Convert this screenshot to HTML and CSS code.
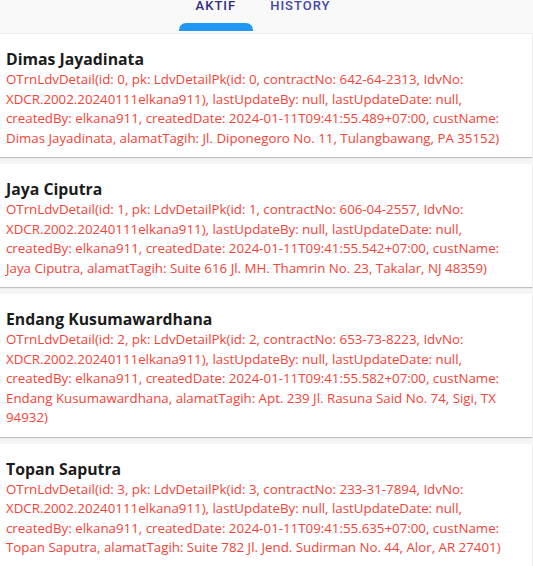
FILE: index.html
```html
<!DOCTYPE html>
<html>
<head>
<meta charset="utf-8">
<link rel="stylesheet" href="styles.css">
</head>
<body>
<div class="tabbar">
  <div class="tab active"><span class="label">AKTIF</span><span class="indicator"></span></div>
  <div class="tab"><span class="label">HISTORY</span></div>
</div>
<div class="list">
  <div class="card">
    <div class="name">Dimas Jayadinata</div>
    <div class="detail">OTrnLdvDetail(id: 0, pk: LdvDetailPk(id: 0, contractNo: 642-64-2313, IdvNo: XDCR.2002.20240111elkana911), lastUpdateBy: null, lastUpdateDate: null, createdBy: elkana911, createdDate: 2024-01-11T09:41:55.489+07:00, custName: Dimas Jayadinata, alamatTagih: Jl. Diponegoro No. 11, Tulangbawang, PA 35152)</div>
  </div>
  <div class="card">
    <div class="name">Jaya Ciputra</div>
    <div class="detail">OTrnLdvDetail(id: 1, pk: LdvDetailPk(id: 1, contractNo: 606-04-2557, IdvNo: XDCR.2002.20240111elkana911), lastUpdateBy: null, lastUpdateDate: null, createdBy: elkana911, createdDate: 2024-01-11T09:41:55.542+07:00, custName: Jaya Ciputra, alamatTagih: Suite 616 Jl. MH. Thamrin No. 23, Takalar, NJ 48359)</div>
  </div>
  <div class="card">
    <div class="name">Endang Kusumawardhana</div>
    <div class="detail">OTrnLdvDetail(id: 2, pk: LdvDetailPk(id: 2, contractNo: 653-73-8223, IdvNo: XDCR.2002.20240111elkana911), lastUpdateBy: null, lastUpdateDate: null, createdBy: elkana911, createdDate: 2024-01-11T09:41:55.582+07:00, custName: Endang Kusumawardhana, alamatTagih: Apt. 239 Jl. Rasuna Said No. 74, Sigi, TX 94932)</div>
  </div>
  <div class="card">
    <div class="name">Topan Saputra</div>
    <div class="detail">OTrnLdvDetail(id: 3, pk: LdvDetailPk(id: 3, contractNo: 233-31-7894, IdvNo: XDCR.2002.20240111elkana911), lastUpdateBy: null, lastUpdateDate: null, createdBy: elkana911, createdDate: 2024-01-11T09:41:55.635+07:00, custName: Topan Saputra, alamatTagih: Suite 782 Jl. Jend. Sudirman No. 44, Alor, AR 27401)</div>
  </div>
</div>
</body>
</html>
```
FILE: styles.css
```css
html, body {
  margin: 0;
  padding: 0;
  background: #f5f5f5;
  overflow: hidden;
}
body {
  width: 533px;
  height: 566px;
  font-family: "Open Sans", "Noto Sans", sans-serif;
}
.tabbar {
  display: flex;
  justify-content: center;
  height: 34px;
  background: #f9f9f9;
  border-bottom: 1px solid #ececec;
  box-sizing: border-box;
  padding-right: 7px;
}
.tab {
  display: flex;
  flex-direction: column;
  align-items: center;
  padding: 0 17px;
  position: relative;
}
.label {
  font-family: Roboto, "Liberation Sans", sans-serif;
  font-size: 13px;
  font-weight: 500;
  letter-spacing: 1px;
  line-height: 16px;
  margin-top: -2px;
  color: #4545a8;
}
.tab.active .label {
  color: #2d2d7f;
}
.indicator {
  position: absolute;
  left: 0;
  right: 0;
  top: 23px;
  height: 8px;
  background: #2196f3;
  border-radius: 7px 7px 0 0;
}
.list {
  display: flex;
  flex-direction: column;
  gap: 7px;
}
.card {
  background: #ffffff;
  padding: 14px 20px 9px 6px;
  margin-right: 1px;
  box-shadow: 0 1px 1px rgba(0,0,0,0.22);
}
.name {
  font-size: 15.8px;
  font-weight: 700;
  color: #1c1c1c;
  line-height: 22px;
}
.detail {
  font-size: 13.3px;
  line-height: 19.5px;
  color: #f44336;
}
```
